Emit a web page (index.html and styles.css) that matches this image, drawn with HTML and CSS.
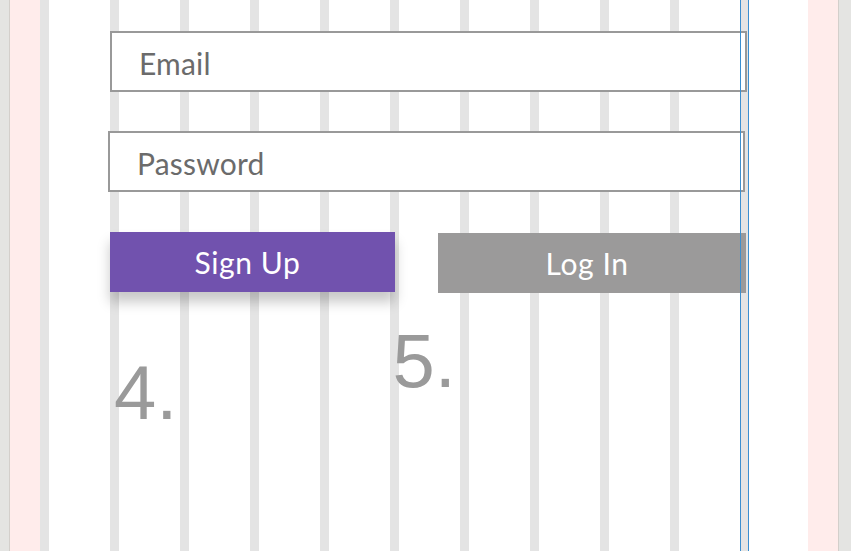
FILE: index.html
```html
<!DOCTYPE html>
<html lang="en">
<head>
<meta charset="utf-8">
<title>Sign Up</title>
<link rel="stylesheet" href="styles.css">
</head>
<body>
<div class="canvas">
  <div class="edge edge-left"></div>
  <div class="gutter"></div>
  <main class="grid">
    <form class="form">
      <div class="field field-email">Email</div>
      <div class="field field-password">Password</div>
      <div class="actions">
        <button type="button" class="btn btn-primary">Sign Up</button>
        <button type="button" class="btn btn-secondary">Log In</button>
      </div>
      <div class="steps">
        <span class="step step-4">4.</span>
        <span class="step step-5">5.</span>
      </div>
    </form>
    <div class="guide guide-a"></div>
    <div class="guide guide-b"></div>
  </main>
  <div class="gutter"></div>
  <div class="edge edge-right"></div>
</div>
</body>
</html>
```

FILE: styles.css
```css
html, body {
  margin: 0;
  padding: 0;
  height: 100%;
  overflow: hidden;
  background: #ffffff;
}

.canvas {
  display: flex;
  height: 551px;
  width: 851px;
}

.edge {
  flex: none;
  background: #e4e4e2;
}

.edge-left {
  width: 9px;
  border-right: 1px solid #d3cfcb;
}

.edge-right {
  width: 12px;
  border-left: 1px solid #d3cfcb;
}

.gutter {
  flex: none;
  width: 30px;
  background: #ffeceb;
}

.grid {
  position: relative;
  flex: none;
  width: 768px;
  background: repeating-linear-gradient(to right, #e4e4e4 0 9px, #ffffff 9px 70px);
}

.form {
  display: flex;
  flex-direction: column;
  align-items: flex-start;
  padding: 31px 0 0 70px;
  margin: 0;
}

.field {
  box-sizing: border-box;
  width: 637px;
  height: 61px;
  display: flex;
  align-items: center;
  padding: 3px 0 0 27px;
  border: 2px solid #999999;
  background: #ffffff;
  font-family: Lato, "Noto Sans", sans-serif;
  font-size: 30px;
  letter-spacing: 0.2px;
  color: #6b6b6b;
}

.field-password {
  margin: 39px 0 0 -2px;
}

.actions {
  display: flex;
  align-items: flex-start;
  margin-top: 40px;
}

.btn {
  box-sizing: border-box;
  height: 60px;
  border: 0;
  padding: 0;
  font-family: Lato, "Noto Sans", sans-serif;
  font-size: 30px;
  letter-spacing: 0.6px;
  color: #ffffff;
  cursor: pointer;
}

.btn-primary {
  width: 285px;
  padding-right: 10px;
  background: #7152ae;
  box-shadow: 0 10px 12px rgba(0, 0, 0, 0.22);
}

.btn-secondary {
  width: 308px;
  margin: 1px 0 0 43px;
  padding-right: 10px;
  background: #9b9a9a;
}

.steps {
  display: flex;
  align-items: flex-start;
  margin-top: 30px;
}

.step {
  font-family: "Liberation Sans", Arial, sans-serif;
  font-size: 76px;
  line-height: 75px;
  color: #9a9a9a;
}

.step-4 {
  margin: 32px 0 0 4px;
}

.step-5 {
  margin-left: 215px;
}

.guide {
  position: absolute;
  top: 0;
  bottom: 0;
  width: 1px;
  background: #3b8fd0;
}

.guide-a {
  left: 700px;
}

.guide-b {
  left: 708px;
}
```
